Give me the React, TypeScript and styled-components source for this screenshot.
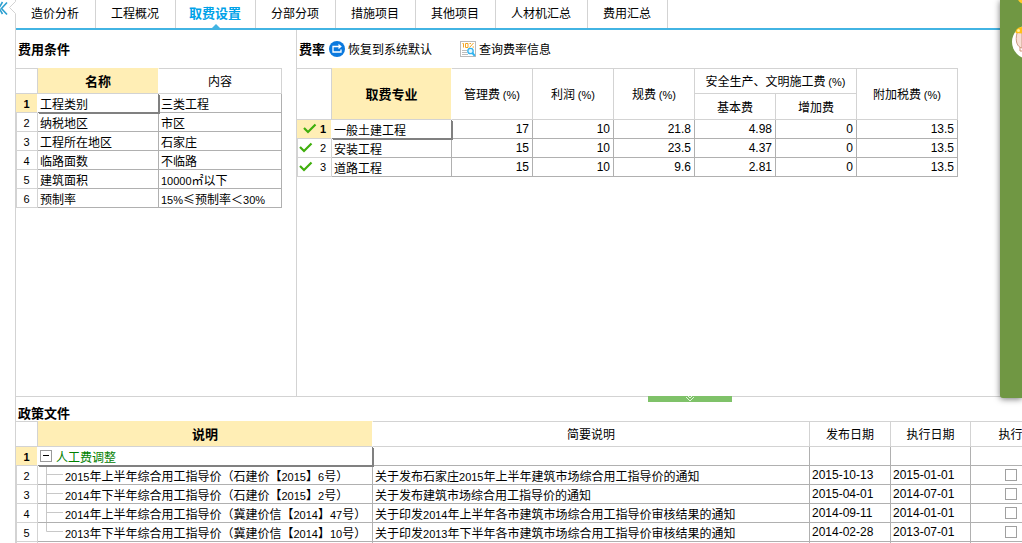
import React from "react";
import styled, { createGlobalStyle, css } from "styled-components";

const line = "#d3d3d3";
const grid = "#b0b0b0";
const dark = "#808080";
const highlight = "#ffeeb5";
const blue = "#42b4e3";

const GlobalStyle = createGlobalStyle`
  * { box-sizing: border-box; }
  body {
    margin: 0;
    background: #fff;
    color: #000;
    font: 12px/16px "Noto Sans CJK SC", sans-serif;
  }
  button {
    border: 0;
    margin: 0;
    padding: 0;
    background: none;
    color: inherit;
    font: inherit;
    cursor: pointer;
  }
`;

const Shell = styled.div`
  position: relative;
  display: flex;
  height: 100vh;
  overflow: hidden;
`;

const Gutter = styled.aside`
  flex: 0 0 16px;
  display: flex;
  flex-direction: column;
`;

const GutterRule = styled.div`
  flex: 1;
  border-right: 1px solid ${line};
`;

const Main = styled.main`
  flex: 1;
  min-width: 0;
  display: flex;
  flex-direction: column;
`;

const TabBar = styled.nav`
  display: flex;
  flex: 0 0 30px;
  border-bottom: 2px solid ${blue};
`;

const Tab = styled.button<{ $active?: boolean }>`
  position: relative;
  padding: 0 16px 2px 15px;
  border-right: 1px solid ${line};
  white-space: nowrap;
  ${(p) =>
    p.$active &&
    css`
      padding: 0 14px 2px 13px;
      color: #00a2e8;
      font-size: 13px;
      font-weight: 700;
      &::after {
        content: "";
        position: absolute;
        left: calc(50% - 4px);
        bottom: 0;
        border: 4px solid transparent;
        border-top: 0;
        border-bottom-color: ${blue};
      }
    `}
`;

const Upper = styled.div`
  flex: 1;
  min-height: 0;
  display: flex;
`;

const ConditionPanel = styled.section`
  flex: 0 0 281px;
  border-right: 1px solid ${line};
`;

const RatePanel = styled.section`
  flex: 1;
  min-width: 0;
  overflow: hidden;
`;

const PolicyPanel = styled.section`
  position: relative;
  flex: 0 0 147px;
  min-height: 0;
  padding-top: 8px;
  border-top: 1px solid ${line};
`;

const PanelHead = styled.header`
  display: flex;
  align-items: center;
  height: 38px;
`;

const Title = styled.h2`
  margin: 0;
  padding-left: 2px;
  font-size: 13px;
  line-height: 16px;
`;

const ToolButton = styled.button<{ $gap: number }>`
  display: flex;
  align-items: center;
  gap: 3px;
  margin-left: ${(p) => p.$gap}px;
  white-space: nowrap;
`;

const Grid = styled.table<{ $width: number }>`
  width: ${(p) => p.$width}px;
  table-layout: fixed;
  border-collapse: separate;
  border-spacing: 0;
`;

const HeadCell = styled.th<{ $active?: boolean; $inner?: boolean }>`
  height: 26px;
  padding: 0;
  border: solid ${line};
  border-width: ${(p) => (p.$inner ? "0 1px 1px 0" : "1px 1px 1px 0")};
  font-weight: 400;
  overflow: hidden;
  white-space: nowrap;
  ${(p) =>
    p.$active &&
    css`
      background: ${highlight};
      border-top-color: ${highlight};
      border-right-color: #fff;
      font-size: 13px;
      font-weight: 700;
    `}
`;

const RowHead = styled.th<{ $active?: boolean }>`
  height: 19px;
  padding: 0;
  border: solid ${line};
  border-width: 0 1px 1px 0;
  font-weight: 400;
  box-shadow: inset 1px 0 0 ${line};
  ${(p) =>
    p.$active &&
    css`
      background: ${highlight};
      background-clip: padding-box;
      border-right-color: #fff;
      font-weight: 700;
      box-shadow: none;
    `}
`;

const CheckedHead = styled.div<{ $active?: boolean }>`
  display: flex;
  align-items: center;
  justify-content: space-between;
  padding: 0 5px 0 ${(p) => (p.$active ? 6 : 2)}px;
`;

const Cell = styled.td<{ $active?: boolean }>`
  height: 19px;
  padding: 1px 3px 0 2px;
  border: solid ${grid};
  border-width: 0 1px 1px 0;
  white-space: nowrap;
  ${(p) =>
    p.$active &&
    css`
      position: relative;
      z-index: 1;
      border-color: ${dark};
      box-shadow: 1px 1px 0 ${dark};
    `}
`;

const FigureCell = styled(Cell)<{ $right?: boolean }>`
  padding: 0 3px 0 2px;
  font-family: "Liberation Sans", Arial, sans-serif;
  text-align: ${(p) => (p.$right ? "right" : "left")};
`;

const TreeCell = styled(Cell)`
  padding: 0 0 0 2px;
`;

const CheckCell = styled(Cell)`
  padding: 0 0 1px;
`;

const Latin = styled.span`
  font-family: "Liberation Sans", Arial, sans-serif;
  font-size: 11px;
  line-height: 12px;
`;

const TreeNode = styled.div<{ $root?: boolean }>`
  display: flex;
  align-items: center;
  height: 18px;
  gap: ${(p) => (p.$root ? 4 : 2)}px;
  color: ${(p) => (p.$root ? "#008000" : "inherit")};
`;

const TreeLabel = styled.span`
  padding-top: 1px;
`;

const Toggle = styled.button`
  display: flex;
`;

const CheckBox = styled.input`
  appearance: none;
  display: block;
  width: 12px;
  height: 12px;
  margin: 0 auto;
  border: 1px solid #a0a0a0;
  background: #fff;
`;

const Splitter = styled.button`
  position: absolute;
  top: -1px;
  left: calc(63% - 2px);
  width: 84px;
  height: 6px;
  background: #7fc269;
  svg { display: block; margin: 0 auto; }
`;

const Dock = styled.aside`
  position: absolute;
  z-index: 2;
  top: 0;
  right: 0;
  width: 22px;
  height: 398px;
  border-radius: 0 0 0 3px;
  background: #709743;
  box-shadow: 0 1px 6px rgba(0, 0, 0, 0.55);
  svg { display: block; }
`;

/* Sets digits and ASCII signs in the narrower Latin face. */
function Mixed({ text }: { text: string }) {
  return (
    <>
      {text.split(/([0-9()%]+)/).map((part, i) =>
        i % 2 ? <Latin key={i}>{part}</Latin> : part
      )}
    </>
  );
}

const Check = () => (
  <svg width="14" height="12" viewBox="0 0 14 12" aria-hidden="true">
    <path d="M1 5 5 9 12.500 1.500" fill="none" stroke="#3fae0c" strokeWidth="2.2" />
  </svg>
);

const CollapseIcon = () => (
  <svg width="16" height="30" viewBox="0 0 16 30" aria-hidden="true">
    <path d="M2.500 2-1 8l3.500 6M7 2.500 1.500 8.500 7 14.500" fill="none" stroke="#2b9fd0" strokeWidth="1.600" />
    <path d="M15.500 0v1.500L9.500 7.500l6 6V30" fill="none" stroke={line} />
  </svg>
);

const RestoreIcon = () => (
  <svg width="16" height="16" viewBox="0 0 16 16" aria-hidden="true">
    <circle cx="8" cy="8" r="8" fill="#0b79de" />
    <path d="M6 5.500H4v5.500h8V8.500M6 5.500h4" fill="none" stroke="#fff" strokeWidth="1.300" />
    <path d="M9.500 2.800v5.400l3.300-2.700z" fill="#fff" />
  </svg>
);

const QueryIcon = () => (
  <svg width="16" height="16" viewBox="0 0 16 16" aria-hidden="true">
    <rect x=".5" y=".5" width="15" height="15" fill="#fff" stroke="#b9b9b9" />
    <path d="M2.500 2.500h1v4M5.500 2.500h2.500v4H5.500zM13.500 2 9.500 6.500M9.500 2.500h1.500M12.500 6h1.500" fill="none" stroke="#f5a623" />
    <path d="M2 9.500h5M2 11.500h5M2 13.500h6" stroke="#bdbdbd" />
    <circle cx="10.500" cy="10" r="2.700" fill="#e4f7ff" stroke="#2eb2ef" strokeWidth="1.300" />
    <path d="m12.400 12 2.400 2.800" stroke="#2eb2ef" strokeWidth="2" />
  </svg>
);

const MinusIcon = () => (
  <svg width="12" height="12" viewBox="0 0 12 12" aria-hidden="true">
    <rect x=".5" y=".5" width="11" height="11" fill="#fff" stroke="#999" />
    <path d="M3 5.500h6" stroke="#000" />
  </svg>
);

const Branch = ({ last }: { last: boolean }) => (
  <svg width="23" height="18" viewBox="0 0 23 18" aria-hidden="true">
    <path d={last ? "M6.500 0v8.500H23" : "M6.500 0v18M6.500 8.500H23"} fill="none" stroke="#c8c8c8" />
  </svg>
);

const DockArt = () => (
  <svg width="22" height="64" viewBox="0 0 22 64" aria-hidden="true">
    <circle cx="25" cy="-4" r="8" fill="#ffc928" />
    <circle cx="29" cy="42" r="17" fill="#fff" />
    <path d="M17 33c-2 8 0 14 5 15V30z" fill="#f8dfd5" stroke="#c99a83" />
    <path d="M15.500 33c0-4 3-6 6.500-6v6.500z" fill="#ffbf16" />
    <circle cx="18.500" cy="30.500" r="1.500" fill="#fff19a" />
    <path d="M20 47v4h2" fill="none" stroke="#d09070" />
  </svg>
);

const tabs = ["造价分析", "工程概况", "取费设置", "分部分项", "措施项目", "其他项目", "人材机汇总", "费用汇总"];

const conditions = [
  ["工程类别", "三类工程"],
  ["纳税地区", "市区"],
  ["工程所在地区", "石家庄"],
  ["临路面数", "不临路"],
  ["建筑面积", "10000㎡以下"],
  ["预制率", "15%≤预制率＜30%"],
];

const rates = [
  ["一般土建工程", "17", "10", "21.8", "4.98", "0", "13.5"],
  ["安装工程", "15", "10", "23.5", "4.37", "0", "13.5"],
  ["道路工程", "15", "10", "9.6", "2.81", "0", "13.5"],
];

const policies = [
  ["2015年上半年综合用工指导价（石建价【2015】6号）", "关于发布石家庄2015年上半年建筑市场综合用工指导价的通知", "2015-10-13", "2015-01-01"],
  ["2014年下半年综合用工指导价（石建价【2015】2号）", "关于发布建筑市场综合用工指导价的通知", "2015-04-01", "2014-07-01"],
  ["2014年上半年综合用工指导价（冀建价信【2014】47号）", "关于印发2014年上半年各市建筑市场综合用工指导价审核结果的通知", "2014-09-11", "2014-01-01"],
  ["2013年下半年综合用工指导价（冀建价信【2014】10号）", "关于印发2013年下半年各市建筑市场综合用工指导价审核结果的通知", "2014-02-28", "2013-07-01"],
];

const Columns = ({ widths }: { widths: number[] }) => (
  <colgroup>
    {widths.map((width, i) => (
      <col key={i} width={width} />
    ))}
  </colgroup>
);

const ConditionTable = () => (
  <Grid $width={266}>
    <Columns widths={[22, 121, 123]} />
    <thead>
      <tr>
        <HeadCell />
        <HeadCell $active>名称</HeadCell>
        <HeadCell>内容</HeadCell>
      </tr>
    </thead>
    <tbody>
      {conditions.map(([name, value], i) => (
        <tr key={name}>
          <RowHead $active={i === 0}><Latin>{i + 1}</Latin></RowHead>
          <Cell $active={i === 0}>{name}</Cell>
          <Cell><Mixed text={value} /></Cell>
        </tr>
      ))}
    </tbody>
  </Grid>
);

const RateTable = () => (
  <Grid $width={661}>
    <Columns widths={[35, 120, 81, 81, 81, 81, 81, 101]} />
    <thead>
      <tr>
        <HeadCell rowSpan={2} />
        <HeadCell rowSpan={2} $active>取费专业</HeadCell>
        <HeadCell rowSpan={2}><Mixed text="管理费 (%)" /></HeadCell>
        <HeadCell rowSpan={2}><Mixed text="利润 (%)" /></HeadCell>
        <HeadCell rowSpan={2}><Mixed text="规费 (%)" /></HeadCell>
        <HeadCell colSpan={2}><Mixed text="安全生产、文明施工费 (%)" /></HeadCell>
        <HeadCell rowSpan={2}><Mixed text="附加税费 (%)" /></HeadCell>
      </tr>
      <tr>
        <HeadCell $inner>基本费</HeadCell>
        <HeadCell $inner>增加费</HeadCell>
      </tr>
    </thead>
    <tbody>
      {rates.map(([name, ...values], i) => (
        <tr key={name}>
          <RowHead $active={i === 0}>
            <CheckedHead $active={i === 0}><Check /><Latin>{i + 1}</Latin></CheckedHead>
          </RowHead>
          <Cell $active={i === 0}>{name}</Cell>
          {values.map((value, n) => (
            <FigureCell key={n} $right>{value}</FigureCell>
          ))}
        </tr>
      ))}
    </tbody>
  </Grid>
);

const PolicyTable = () => (
  <Grid $width={1035}>
    <Columns widths={[22, 335, 437, 81, 80, 80]} />
    <thead>
      <tr>
        <HeadCell />
        <HeadCell $active>说明</HeadCell>
        <HeadCell>简要说明</HeadCell>
        <HeadCell>发布日期</HeadCell>
        <HeadCell>执行日期</HeadCell>
        <HeadCell>执行</HeadCell>
      </tr>
    </thead>
    <tbody>
      <tr>
        <RowHead $active><Latin>1</Latin></RowHead>
        <TreeCell $active>
          <TreeNode $root>
            <Toggle aria-label="折叠"><MinusIcon /></Toggle>
            <TreeLabel>人工费调整</TreeLabel>
          </TreeNode>
        </TreeCell>
        <Cell /><Cell /><Cell /><Cell />
      </tr>
      {policies.map(([name, summary, issued, effective], i) => (
        <tr key={name}>
          <RowHead><Latin>{i + 2}</Latin></RowHead>
          <TreeCell>
            <TreeNode>
              <Branch last={i === policies.length - 1} />
              <TreeLabel><Mixed text={name} /></TreeLabel>
            </TreeNode>
          </TreeCell>
          <Cell><Mixed text={summary} /></Cell>
          <FigureCell>{issued}</FigureCell>
          <FigureCell>{effective}</FigureCell>
          <CheckCell><CheckBox type="checkbox" aria-label={`执行 ${name}`} /></CheckCell>
        </tr>
      ))}
      <tr>
        <RowHead /><Cell /><Cell /><Cell /><Cell /><Cell />
      </tr>
    </tbody>
  </Grid>
);

export default function App() {
  return (
    <Shell>
      <GlobalStyle />
      <Gutter>
        <Toggle aria-label="收起导航"><CollapseIcon /></Toggle>
        <GutterRule />
      </Gutter>
      <Main>
        <TabBar>
          {tabs.map((name) => (
            <Tab key={name} $active={name === "取费设置"}>{name}</Tab>
          ))}
        </TabBar>
        <Upper>
          <ConditionPanel>
            <PanelHead><Title>费用条件</Title></PanelHead>
            <ConditionTable />
          </ConditionPanel>
          <RatePanel>
            <PanelHead>
              <Title>费率</Title>
              <ToolButton $gap={4}><RestoreIcon />恢复到系统默认</ToolButton>
              <ToolButton $gap={28}><QueryIcon />查询费率信息</ToolButton>
            </PanelHead>
            <RateTable />
          </RatePanel>
        </Upper>
        <PolicyPanel>
          <Splitter aria-label="收起政策文件">
            <svg width="10" height="6" viewBox="0 0 10 6" aria-hidden="true">
              <path d="m1 1 4 4 4-4M3 0l2 2 2-2" fill="none" stroke="#e4f5de" />
            </svg>
          </Splitter>
          <Title>政策文件</Title>
          <PolicyTable />
        </PolicyPanel>
      </Main>
      <Dock><DockArt /></Dock>
    </Shell>
  );
}
